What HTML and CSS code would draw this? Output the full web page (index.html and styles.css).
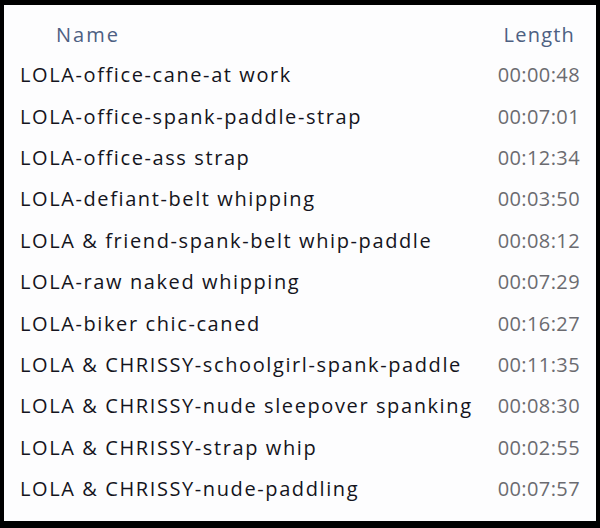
FILE: index.html
```html
<!DOCTYPE html>
<html>
<head>
<meta charset="utf-8">
<link rel="stylesheet" href="styles.css">
</head>
<body>
<div class="frame">
  <div class="panel">
    <div class="header">
      <span class="h-name">Name</span>
      <span class="h-len">Length</span>
    </div>
    <div class="list">
      <div class="row"><span class="name">LOLA-office-cane-at work</span><span class="len">00:00:48</span></div>
      <div class="row"><span class="name">LOLA-office-spank-paddle-strap</span><span class="len">00:07:01</span></div>
      <div class="row"><span class="name">LOLA-office-ass strap</span><span class="len">00:12:34</span></div>
      <div class="row"><span class="name">LOLA-defiant-belt whipping</span><span class="len">00:03:50</span></div>
      <div class="row"><span class="name">LOLA &amp; friend-spank-belt whip-paddle</span><span class="len">00:08:12</span></div>
      <div class="row"><span class="name">LOLA-raw naked whipping</span><span class="len">00:07:29</span></div>
      <div class="row"><span class="name">LOLA-biker chic-caned</span><span class="len">00:16:27</span></div>
      <div class="row"><span class="name">LOLA &amp; CHRISSY-schoolgirl-spank-paddle</span><span class="len">00:11:35</span></div>
      <div class="row"><span class="name">LOLA &amp; CHRISSY-nude sleepover spanking</span><span class="len">00:08:30</span></div>
      <div class="row"><span class="name">LOLA &amp; CHRISSY-strap whip</span><span class="len">00:02:55</span></div>
      <div class="row"><span class="name">LOLA &amp; CHRISSY-nude-paddling</span><span class="len">00:07:57</span></div>
    </div>
  </div>
</div>
</body>
</html>
```
FILE: styles.css
```css
html, body {
  margin: 0;
  padding: 0;
  background: #000;
}
.frame {
  width: 600px;
  height: 528px;
  box-sizing: border-box;
  padding: 5px 4px 7px 4px;
  background: #000;
}
.panel {
  height: 100%;
  background: #fdfdfe;
  box-sizing: border-box;
  padding: 0 16px 0 16px;
  font-family: "Open Sans", "Noto Sans", sans-serif;
  font-size: 20px;
  letter-spacing: 1.6px;
}
.header {
  height: 49px;
  display: flex;
  align-items: center;
  justify-content: space-between;
  color: #4d6082;
}
.h-name {
  margin-left: 36px;
  margin-top: 10px;
  letter-spacing: 2px;
}
.h-len {
  margin-right: 5px;
  margin-top: 10px;
  letter-spacing: 1.2px;
}
.row {
  height: 41.4px;
  display: flex;
  align-items: center;
  justify-content: space-between;
}
.name {
  color: #141420;
}
.len {
  color: #6b6b70;
  letter-spacing: 0.4px;
}
```
